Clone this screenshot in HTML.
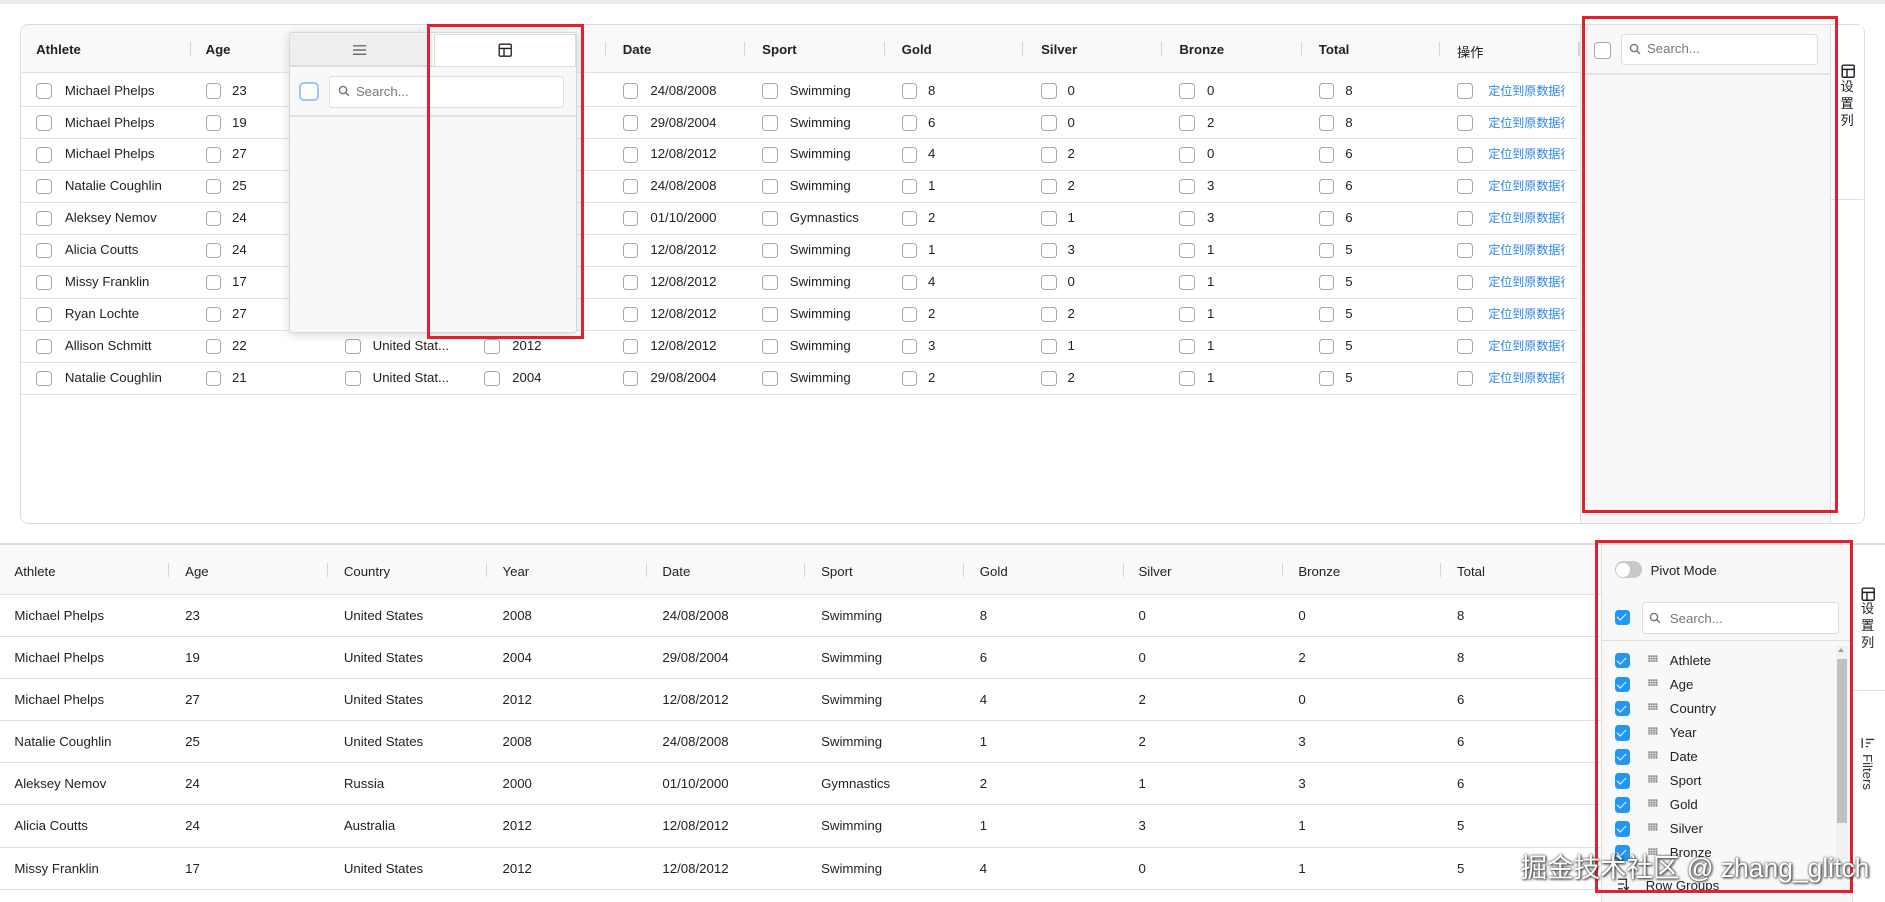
<!DOCTYPE html>
<html><head><meta charset="utf-8"><style>
html,body{margin:0;padding:0;background:#fff;overflow:hidden}
body{width:1885px;height:902px}
#w{zoom:1.20217;position:relative;width:1568px;height:750px;font-family:"Liberation Sans","Noto Sans CJK SC",sans-serif;font-size:11px;color:#222}
#w *{box-sizing:border-box}
.a{position:absolute}
.r{position:absolute;left:17px;width:1296px;height:27px;border-bottom:1px solid #e2e2e2}
.r span,.r i,.h span{position:absolute}
.r span{top:0;line-height:27px;white-space:nowrap}
.r i{top:7px;width:13px;height:13px;border:1px solid #a8a8a8;border-radius:3px;background:#fff}
.lk{color:#2f84e0;font-size:10px;width:64px;overflow:hidden}
.h{position:absolute;font-weight:bold;font-size:11px}
.sep{position:absolute;width:1px;height:12px;background:#d5d5d5}
.b{position:absolute;left:0;width:1332px;height:35px;border-bottom:1px solid #e2e2e2}
.b span{position:absolute;line-height:35px;white-space:nowrap}
.cb{position:absolute;width:13px;height:13px;border-radius:3px;background:#2196f3}
.cb:after{content:"";position:absolute;left:4px;top:1.5px;width:3px;height:7px;border:solid #fff;border-width:0 1.6px 1.6px 0;transform:rotate(45deg)}
.li{position:absolute;left:1343px;height:20px;width:180px}
.li .cb{left:0;top:3px}
.li b{position:absolute;left:28px;top:5px;width:8px;height:6px;background:radial-gradient(circle,#888 0.7px,transparent 1px) 0 0/2px 2px}
.li span{position:absolute;left:46px;top:3px;font-size:11px}
.red{position:absolute;border:3px solid #e5202e}
</style></head><body><div id="w">
<div class="a" style="left:0;top:0;width:1568px;height:3px;background:#ececec"></div>

<!-- top grid -->
<div class="a" style="left:17px;top:20px;width:1534px;height:416px;border:1px solid #dcdcdc;border-radius:7px;background:#fff"></div>
<div class="a" style="left:18px;top:21px;width:1296px;height:40px;background:#f9f9f9;border-bottom:1px solid #e2e2e2;border-radius:6px 0 0 0"></div>
<div class="h" style="left:30px;top:35px">Athlete</div>
<div class="h" style="left:171px;top:35px">Age</div>
<div class="h" style="left:518px;top:35px">Date</div>
<div class="h" style="left:634px;top:35px">Sport</div>
<div class="h" style="left:750px;top:35px">Gold</div>
<div class="h" style="left:866px;top:35px">Silver</div>
<div class="h" style="left:981px;top:35px">Bronze</div>
<div class="h" style="left:1097px;top:35px">Total</div>
<div class="h" style="left:1212px;top:35px;font-weight:normal">操作</div>
<div class="sep" style="left:158px;top:35px"></div><div class="sep" style="left:503px;top:35px"></div><div class="sep" style="left:619px;top:35px"></div><div class="sep" style="left:735px;top:35px"></div><div class="sep" style="left:850px;top:35px"></div><div class="sep" style="left:966px;top:35px"></div><div class="sep" style="left:1082px;top:35px"></div><div class="sep" style="left:1197px;top:35px"></div><div class="sep" style="left:1313px;top:35px"></div>

<div class="r" style="top:62px"><i style="left:13px"></i><span style="left:37px">Michael Phelps</span><i style="left:154px"></i><span style="left:176px">23</span><i style="left:501px"></i><span style="left:524px">24/08/2008</span><i style="left:617px"></i><span style="left:640px">Swimming</span><i style="left:733px"></i><span style="left:755px">8</span><i style="left:849px"></i><span style="left:871px">0</span><i style="left:964px"></i><span style="left:987px">0</span><i style="left:1080px"></i><span style="left:1102px">8</span><i style="left:1195px"></i><span class="lk" style="left:1221px">定位到原数据行</span></div>
<div class="r" style="top:88.6px"><i style="left:13px"></i><span style="left:37px">Michael Phelps</span><i style="left:154px"></i><span style="left:176px">19</span><i style="left:501px"></i><span style="left:524px">29/08/2004</span><i style="left:617px"></i><span style="left:640px">Swimming</span><i style="left:733px"></i><span style="left:755px">6</span><i style="left:849px"></i><span style="left:871px">0</span><i style="left:964px"></i><span style="left:987px">2</span><i style="left:1080px"></i><span style="left:1102px">8</span><i style="left:1195px"></i><span class="lk" style="left:1221px">定位到原数据行</span></div>
<div class="r" style="top:115.2px"><i style="left:13px"></i><span style="left:37px">Michael Phelps</span><i style="left:154px"></i><span style="left:176px">27</span><i style="left:501px"></i><span style="left:524px">12/08/2012</span><i style="left:617px"></i><span style="left:640px">Swimming</span><i style="left:733px"></i><span style="left:755px">4</span><i style="left:849px"></i><span style="left:871px">2</span><i style="left:964px"></i><span style="left:987px">0</span><i style="left:1080px"></i><span style="left:1102px">6</span><i style="left:1195px"></i><span class="lk" style="left:1221px">定位到原数据行</span></div>
<div class="r" style="top:141.8px"><i style="left:13px"></i><span style="left:37px">Natalie Coughlin</span><i style="left:154px"></i><span style="left:176px">25</span><i style="left:501px"></i><span style="left:524px">24/08/2008</span><i style="left:617px"></i><span style="left:640px">Swimming</span><i style="left:733px"></i><span style="left:755px">1</span><i style="left:849px"></i><span style="left:871px">2</span><i style="left:964px"></i><span style="left:987px">3</span><i style="left:1080px"></i><span style="left:1102px">6</span><i style="left:1195px"></i><span class="lk" style="left:1221px">定位到原数据行</span></div>
<div class="r" style="top:168.4px"><i style="left:13px"></i><span style="left:37px">Aleksey Nemov</span><i style="left:154px"></i><span style="left:176px">24</span><i style="left:501px"></i><span style="left:524px">01/10/2000</span><i style="left:617px"></i><span style="left:640px">Gymnastics</span><i style="left:733px"></i><span style="left:755px">2</span><i style="left:849px"></i><span style="left:871px">1</span><i style="left:964px"></i><span style="left:987px">3</span><i style="left:1080px"></i><span style="left:1102px">6</span><i style="left:1195px"></i><span class="lk" style="left:1221px">定位到原数据行</span></div>
<div class="r" style="top:195px"><i style="left:13px"></i><span style="left:37px">Alicia Coutts</span><i style="left:154px"></i><span style="left:176px">24</span><i style="left:501px"></i><span style="left:524px">12/08/2012</span><i style="left:617px"></i><span style="left:640px">Swimming</span><i style="left:733px"></i><span style="left:755px">1</span><i style="left:849px"></i><span style="left:871px">3</span><i style="left:964px"></i><span style="left:987px">1</span><i style="left:1080px"></i><span style="left:1102px">5</span><i style="left:1195px"></i><span class="lk" style="left:1221px">定位到原数据行</span></div>
<div class="r" style="top:221.6px"><i style="left:13px"></i><span style="left:37px">Missy Franklin</span><i style="left:154px"></i><span style="left:176px">17</span><i style="left:501px"></i><span style="left:524px">12/08/2012</span><i style="left:617px"></i><span style="left:640px">Swimming</span><i style="left:733px"></i><span style="left:755px">4</span><i style="left:849px"></i><span style="left:871px">0</span><i style="left:964px"></i><span style="left:987px">1</span><i style="left:1080px"></i><span style="left:1102px">5</span><i style="left:1195px"></i><span class="lk" style="left:1221px">定位到原数据行</span></div>
<div class="r" style="top:248.2px"><i style="left:13px"></i><span style="left:37px">Ryan Lochte</span><i style="left:154px"></i><span style="left:176px">27</span><i style="left:501px"></i><span style="left:524px">12/08/2012</span><i style="left:617px"></i><span style="left:640px">Swimming</span><i style="left:733px"></i><span style="left:755px">2</span><i style="left:849px"></i><span style="left:871px">2</span><i style="left:964px"></i><span style="left:987px">1</span><i style="left:1080px"></i><span style="left:1102px">5</span><i style="left:1195px"></i><span class="lk" style="left:1221px">定位到原数据行</span></div>
<div class="r" style="top:274.8px"><i style="left:13px"></i><span style="left:37px">Allison Schmitt</span><i style="left:154px"></i><span style="left:176px">22</span><i style="left:270px"></i><span style="left:293px">United Stat...</span><i style="left:386px"></i><span style="left:409px">2012</span><i style="left:501px"></i><span style="left:524px">12/08/2012</span><i style="left:617px"></i><span style="left:640px">Swimming</span><i style="left:733px"></i><span style="left:755px">3</span><i style="left:849px"></i><span style="left:871px">1</span><i style="left:964px"></i><span style="left:987px">1</span><i style="left:1080px"></i><span style="left:1102px">5</span><i style="left:1195px"></i><span class="lk" style="left:1221px">定位到原数据行</span></div>
<div class="r" style="top:301.4px"><i style="left:13px"></i><span style="left:37px">Natalie Coughlin</span><i style="left:154px"></i><span style="left:176px">21</span><i style="left:270px"></i><span style="left:293px">United Stat...</span><i style="left:386px"></i><span style="left:409px">2004</span><i style="left:501px"></i><span style="left:524px">29/08/2004</span><i style="left:617px"></i><span style="left:640px">Swimming</span><i style="left:733px"></i><span style="left:755px">2</span><i style="left:849px"></i><span style="left:871px">2</span><i style="left:964px"></i><span style="left:987px">1</span><i style="left:1080px"></i><span style="left:1102px">5</span><i style="left:1195px"></i><span class="lk" style="left:1221px">定位到原数据行</span></div>

<!-- top side panel -->
<div class="a" style="left:1314px;top:21px;width:209px;height:414px;background:#f8f8f8;border-left:1px solid #e0e0e0;border-right:1px solid #e0e0e0"></div>
<div class="a" style="left:1314px;top:61px;width:209px;height:1px;background:#e2e2e2"></div>
<div class="a" style="left:1326px;top:35px;width:14px;height:14px;border:1px solid #a8a8a8;border-radius:3px;background:#fff"></div>
<div class="a" style="left:1348px;top:28px;width:164px;height:26px;border:1px solid #dcdcdc;border-radius:3px;background:#fff"></div>
<svg class="a" style="left:1355px;top:36px" width="10" height="10" viewBox="0 0 10 10"><circle cx="4.2" cy="4.2" r="3" fill="none" stroke="#777" stroke-width="1.2"/><path d="M6.4 6.4L9 9" stroke="#777" stroke-width="1.2"/></svg>
<div class="a" style="left:1370px;top:34px;font-size:11px;color:#777">Search...</div>
<div class="a" style="left:1523px;top:21px;width:27px;height:145px;border-bottom:1px solid #e2e2e2;background:#fff"></div>
<svg class="a" style="left:1531px;top:53px" width="12" height="12" viewBox="0 0 12 12"><rect x="1" y="1" width="10" height="10" rx="1" fill="none" stroke="#222" stroke-width="1.2"/><path d="M1 4.5H11M5 4.5V11" stroke="#222" stroke-width="1.2"/></svg>
<div class="a" style="left:1531px;top:66px;width:12px;font-size:11px;line-height:14px">设<br>置<br>列</div>
<div class="red" style="left:1316px;top:13px;width:213px;height:414px"></div>

<!-- popup -->
<div class="a" style="left:240px;top:27px;width:240px;height:250px;background:#f8f8f8;border:1px solid #d8d8d8;border-radius:3px;box-shadow:0 2px 8px rgba(0,0,0,.15)"></div>
<div class="a" style="left:241px;top:28px;width:118px;height:27px;background:#efefef;border-bottom:1px solid #dcdcdc"></div>
<div class="a" style="left:361px;top:28px;width:118px;height:27px;background:#fff;border:1px solid #dcdcdc;border-bottom:none"></div>
<svg class="a" style="left:294px;top:37px" width="11" height="10" viewBox="0 0 11 10"><path d="M0 1.5H11M0 5H11M0 8.5H11" stroke="#555" stroke-width="1"/></svg>
<svg class="a" style="left:414px;top:36px" width="12" height="12" viewBox="0 0 12 12"><rect x="1" y="1" width="10" height="10" rx="1" fill="none" stroke="#222" stroke-width="1.1"/><path d="M1 4.5H11M5 4.5V11" stroke="#222" stroke-width="1.1"/></svg>
<div class="a" style="left:241px;top:55px;width:238px;height:1px;background:#dcdcdc"></div>
<div class="a" style="left:249px;top:68px;width:16px;height:16px;border:2px solid #9cc7ee;border-radius:4px;background:#fff"></div>
<div class="a" style="left:274px;top:63px;width:195px;height:27px;border:1px solid #e0e0e0;border-radius:3px;background:#fff"></div>
<svg class="a" style="left:281px;top:71px" width="10" height="10" viewBox="0 0 10 10"><circle cx="4.2" cy="4.2" r="3" fill="none" stroke="#777" stroke-width="1.2"/><path d="M6.4 6.4L9 9" stroke="#777" stroke-width="1.2"/></svg>
<div class="a" style="left:296px;top:70px;font-size:11px;color:#777">Search...</div>
<div class="a" style="left:241px;top:96px;width:238px;height:1px;background:#e2e2e2"></div>
<div class="red" style="left:355px;top:20px;width:131px;height:262px"></div>

<!-- divider between grids -->
<div class="a" style="left:0;top:452px;width:1568px;height:1px;background:#dcdcdc"></div>

<!-- bottom grid -->
<div class="a" style="left:0;top:453px;width:1332px;height:42px;background:#f9f9f9;border-bottom:1px solid #e2e2e2"></div>
<div class="h" style="left:12px;top:469px;font-weight:normal">Athlete</div>
<div class="h" style="left:154px;top:469px;font-weight:normal">Age</div>
<div class="h" style="left:286px;top:469px;font-weight:normal">Country</div>
<div class="h" style="left:418px;top:469px;font-weight:normal">Year</div>
<div class="h" style="left:551px;top:469px;font-weight:normal">Date</div>
<div class="h" style="left:683px;top:469px;font-weight:normal">Sport</div>
<div class="h" style="left:815px;top:469px;font-weight:normal">Gold</div>
<div class="h" style="left:947px;top:469px;font-weight:normal">Silver</div>
<div class="h" style="left:1080px;top:469px;font-weight:normal">Bronze</div>
<div class="h" style="left:1212px;top:469px;font-weight:normal">Total</div>
<div class="sep" style="left:140px;top:468px"></div><div class="sep" style="left:272px;top:468px"></div><div class="sep" style="left:404px;top:468px"></div><div class="sep" style="left:537px;top:468px"></div><div class="sep" style="left:669px;top:468px"></div><div class="sep" style="left:801px;top:468px"></div><div class="sep" style="left:934px;top:468px"></div><div class="sep" style="left:1066px;top:468px"></div><div class="sep" style="left:1198px;top:468px"></div>

<div class="b" style="top:495px"><span style="left:12px">Michael Phelps</span><span style="left:154px">23</span><span style="left:286px">United States</span><span style="left:418px">2008</span><span style="left:551px">24/08/2008</span><span style="left:683px">Swimming</span><span style="left:815px">8</span><span style="left:947px">0</span><span style="left:1080px">0</span><span style="left:1212px">8</span></div>
<div class="b" style="top:530px"><span style="left:12px">Michael Phelps</span><span style="left:154px">19</span><span style="left:286px">United States</span><span style="left:418px">2004</span><span style="left:551px">29/08/2004</span><span style="left:683px">Swimming</span><span style="left:815px">6</span><span style="left:947px">0</span><span style="left:1080px">2</span><span style="left:1212px">8</span></div>
<div class="b" style="top:565px"><span style="left:12px">Michael Phelps</span><span style="left:154px">27</span><span style="left:286px">United States</span><span style="left:418px">2012</span><span style="left:551px">12/08/2012</span><span style="left:683px">Swimming</span><span style="left:815px">4</span><span style="left:947px">2</span><span style="left:1080px">0</span><span style="left:1212px">6</span></div>
<div class="b" style="top:600px"><span style="left:12px">Natalie Coughlin</span><span style="left:154px">25</span><span style="left:286px">United States</span><span style="left:418px">2008</span><span style="left:551px">24/08/2008</span><span style="left:683px">Swimming</span><span style="left:815px">1</span><span style="left:947px">2</span><span style="left:1080px">3</span><span style="left:1212px">6</span></div>
<div class="b" style="top:635px"><span style="left:12px">Aleksey Nemov</span><span style="left:154px">24</span><span style="left:286px">Russia</span><span style="left:418px">2000</span><span style="left:551px">01/10/2000</span><span style="left:683px">Gymnastics</span><span style="left:815px">2</span><span style="left:947px">1</span><span style="left:1080px">3</span><span style="left:1212px">6</span></div>
<div class="b" style="top:670px"><span style="left:12px">Alicia Coutts</span><span style="left:154px">24</span><span style="left:286px">Australia</span><span style="left:418px">2012</span><span style="left:551px">12/08/2012</span><span style="left:683px">Swimming</span><span style="left:815px">1</span><span style="left:947px">3</span><span style="left:1080px">1</span><span style="left:1212px">5</span></div>
<div class="b" style="top:705px"><span style="left:12px">Missy Franklin</span><span style="left:154px">17</span><span style="left:286px">United States</span><span style="left:418px">2012</span><span style="left:551px">12/08/2012</span><span style="left:683px">Swimming</span><span style="left:815px">4</span><span style="left:947px">0</span><span style="left:1080px">1</span><span style="left:1212px">5</span></div>

<!-- bottom side panel -->
<div class="a" style="left:1332px;top:453px;width:209px;height:297px;background:#f8f8f8;border-left:1px solid #e0e0e0;border-right:1px solid #e0e0e0"></div>
<div class="a" style="left:1343px;top:467px;width:23px;height:14px;border-radius:7px;background:#c8c8c8"></div>
<div class="a" style="left:1344px;top:468px;width:12px;height:12px;border-radius:6px;background:#fff"></div>
<div class="a" style="left:1373px;top:468px;font-size:11px">Pivot Mode</div>
<div class="cb" style="left:1343px;top:507px"></div>
<div class="a" style="left:1366px;top:501px;width:164px;height:26px;border:1px solid #dcdcdc;border-radius:3px;background:#fff"></div>
<svg class="a" style="left:1372px;top:509px" width="10" height="10" viewBox="0 0 10 10"><circle cx="4.2" cy="4.2" r="3" fill="none" stroke="#777" stroke-width="1.2"/><path d="M6.4 6.4L9 9" stroke="#777" stroke-width="1.2"/></svg>
<div class="a" style="left:1389px;top:508px;font-size:11px;color:#777">Search...</div>
<div class="a" style="left:1333px;top:532px;width:207px;height:1px;background:#e0e0e0"></div>
<div class="li" style="top:540px"><i class="cb"></i><b></b><span>Athlete</span></div>
<div class="li" style="top:560px"><i class="cb"></i><b></b><span>Age</span></div>
<div class="li" style="top:580px"><i class="cb"></i><b></b><span>Country</span></div>
<div class="li" style="top:600px"><i class="cb"></i><b></b><span>Year</span></div>
<div class="li" style="top:620px"><i class="cb"></i><b></b><span>Date</span></div>
<div class="li" style="top:640px"><i class="cb"></i><b></b><span>Sport</span></div>
<div class="li" style="top:660px"><i class="cb"></i><b></b><span>Gold</span></div>
<div class="li" style="top:680px"><i class="cb"></i><b></b><span>Silver</span></div>
<div class="li" style="top:700px"><i class="cb"></i><b></b><span>Bronze</span></div>
<div class="a" style="left:1527px;top:537px;width:10px;height:178px;background:#f1f1f1"></div>
<div class="a" style="left:1528px;top:548px;width:8px;height:137px;background:#c1c1c1"></div>
<div class="a" style="left:1529px;top:539px;width:0;height:0;border:3px solid transparent;border-bottom:4px solid #a0a0a0;border-top:none"></div>
<svg class="a" style="left:1346px;top:730px" width="12" height="11" viewBox="0 0 12 11"><path d="M0 1H7V10M0 5H5M0 9H4M5 7.5L7 10L9 7.5" fill="none" stroke="#333" stroke-width="1.1"/></svg>
<div class="a" style="left:1369px;top:730px;font-size:11px">Row Groups</div>
<div class="a" style="left:1541px;top:453px;width:27px;height:122px;border-bottom:1px solid #e2e2e2;background:#fff"></div>
<svg class="a" style="left:1548px;top:488px" width="12" height="12" viewBox="0 0 12 12"><rect x="1" y="1" width="10" height="10" rx="1" fill="none" stroke="#222" stroke-width="1.2"/><path d="M1 4.5H11M5 4.5V11" stroke="#222" stroke-width="1.2"/></svg>
<div class="a" style="left:1548px;top:500px;width:12px;font-size:11px;line-height:14px">设<br>置<br>列</div>
<svg class="a" style="left:1548px;top:613px" width="12" height="10" viewBox="0 0 12 10"><path d="M1 1V9M4 2H11M4 5H8M4 8H6" fill="none" stroke="#333" stroke-width="1.1" transform="rotate(0)"/></svg>
<div class="a" style="left:1560px;top:627px;font-size:11px;transform-origin:0 0;transform:rotate(90deg);color:#333">Filters</div>
<div class="red" style="left:1327px;top:449px;width:214px;height:294px"></div>

<div class="a" style="left:1265px;top:704px;font-size:22px;color:#fff;white-space:nowrap;text-shadow:0 0 2px #333,1px 1px 2px #333;font-family:'Liberation Sans','Noto Sans CJK SC',sans-serif">掘金技术社区 @ zhang_glitch</div>
</div></body></html>
